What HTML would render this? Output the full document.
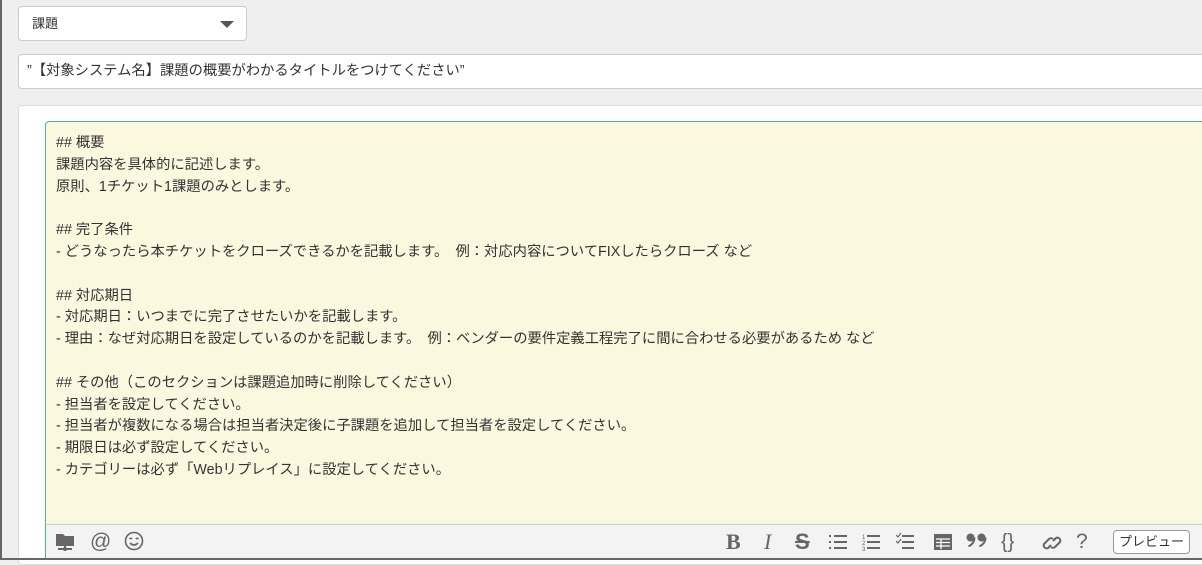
<!DOCTYPE html>
<html><head><meta charset="utf-8"><style>
*{box-sizing:border-box;margin:0;padding:0}
body{width:1202px;height:560px;background:#efefef;font-family:"Liberation Sans","Noto Sans CJK JP",sans-serif;color:#333;position:relative;overflow:hidden}
.bl{position:absolute;left:0;top:0;width:2px;height:560px;background:#666;z-index:9}
.bb{position:absolute;left:0;top:558px;width:1202px;height:2px;background:#666;z-index:9}
.sel{position:absolute;left:18px;top:6px;width:229px;height:35px;background:#fff;border:1px solid #ccc;border-radius:4px;font-size:13px;line-height:33px;padding-left:13px}
.sel:after{content:"";position:absolute;right:12px;top:14px;border-left:7px solid transparent;border-right:7px solid transparent;border-top:7px solid #555}
.title{position:absolute;left:18px;top:54px;width:1190px;height:35px;background:#fff;border:1px solid #ccc;border-radius:4px;font-size:14.3px;line-height:33px;padding-left:8px}
.panel{position:absolute;left:18px;top:105px;width:1200px;height:460px;background:#fff;border:1px solid #ddd;border-radius:4px}
.ta{position:absolute;left:45px;top:121px;width:1160px;height:404px;background:#faf8df;border:1px solid #4db38e;border-bottom:1px solid #ccc;border-radius:4px 0 0 0;font-size:14.3px;line-height:21.8px;padding:11px 0 0 10px;white-space:pre}
.tb{position:absolute;left:45px;top:525px;width:1160px;height:35px;background:#f3f3f3;border-left:1px solid #4db38e}
.ic{position:absolute;top:4px;color:#666;font-size:22px;line-height:26px}
.pv{position:absolute;left:1067px;top:5px;width:77px;height:24px;border:1px solid #999;border-radius:4px;background:#fff;font-size:13px;line-height:22px;text-align:center;color:#333}
svg{position:absolute}
</style></head><body>
<div class="bl"></div><div class="bb"></div>
<div class="sel">課題</div>
<div class="title">”【対象システム名】課題の概要がわかるタイトルをつけてください”</div>
<div class="panel"></div>
<div class="ta">## 概要
課題内容を具体的に記述します。
原則、1チケット1課題のみとします。

## 完了条件
- どうなったら本チケットをクローズできるかを記載します。　例：対応内容についてFIXしたらクローズ など

## 対応期日
- 対応期日：いつまでに完了させたいかを記載します。
- 理由：なぜ対応期日を設定しているのかを記載します。　例：ベンダーの要件定義工程完了に間に合わせる必要があるため など

## その他（このセクションは課題追加時に削除してください）
- 担当者を設定してください。
- 担当者が複数になる場合は担当者決定後に子課題を追加して担当者を設定してください。
- 期限日は必ず設定してください。
- カテゴリーは必ず「Webリプレイス」に設定してください。</div>
<div class="tb">
<svg style="left:9px;top:7px" width="20" height="20" viewBox="0 0 20 20"><path d="M1 2h7l2 2h9v10H1z" fill="#666"/><path d="M10 14v3M3 17h14" stroke="#666" stroke-width="2"/><circle cx="10" cy="17" r="2" fill="#666"/></svg>
<span class="ic" style="left:44px;font-size:21px">@</span>
<svg style="left:78px;top:6px" width="20" height="20" viewBox="0 0 20 20"><circle cx="10" cy="10" r="8.5" fill="none" stroke="#666" stroke-width="1.6"/><path d="M5.5 8q1.3-1.5 2.6 0M11.9 8q1.3-1.5 2.6 0M6 12q4 4 8 0" fill="none" stroke="#666" stroke-width="1.6"/></svg>
<span class="ic" style="left:680px;font-weight:bold;font-family:'Liberation Serif',serif">B</span>
<span class="ic" style="left:718px;font-style:italic;font-family:'Liberation Serif',serif">I</span>
<span class="ic" style="left:749px;text-decoration:line-through;font-weight:bold">S</span>
<svg style="left:783px;top:9px" width="18" height="16" viewBox="0 0 18 16"><path d="M0 2h2M0 8h2M0 14h2M5 2h13M5 8h13M5 14h13" stroke="#666" stroke-width="2"/></svg>
<svg style="left:816px;top:8px" width="18" height="18" viewBox="0 0 18 18"><text x="0" y="6" font-size="6" fill="#666">1</text><text x="0" y="12" font-size="6" fill="#666">2</text><text x="0" y="18" font-size="6" fill="#666">3</text><path d="M5 3h13M5 9h13M5 15h13" stroke="#666" stroke-width="2"/></svg>
<svg style="left:850px;top:8px" width="18" height="18" viewBox="0 0 18 18"><path d="M0 2l2 2 3-4" fill="none" stroke="#666" stroke-width="1.2"/><path d="M0 8l2 2 3-4" fill="none" stroke="#666" stroke-width="1.2"/><path d="M6 3h12M6 9h12M6 15h12" stroke="#666" stroke-width="2"/></svg>
<svg style="left:888px;top:9px" width="18" height="16" viewBox="0 0 18 16"><rect x="0" y="0" width="18" height="16" fill="#666"/><path d="M2 5h14M2 8.5h14M2 12h14M7 5v10" stroke="#fff" stroke-width="1.3"/></svg>
<svg style="left:920px;top:8px" width="22" height="14" viewBox="0 0 22 14"><circle cx="4.5" cy="4.5" r="4" fill="#666"/><path d="M8.5 4.5q0 6-6 9" stroke="#666" stroke-width="2" fill="none"/><circle cx="15.5" cy="4.5" r="4" fill="#666"/><path d="M19.5 4.5q0 6-6 9" stroke="#666" stroke-width="2" fill="none"/></svg>
<span class="ic" style="left:955px;font-size:20px">{}</span>
<svg style="left:996px;top:8px" width="20" height="20" viewBox="0 0 20 20"><path d="M9 12l-3 3a3 3 0 01-4-4l5-5a3 3 0 014 0M11 8l3-3a3 3 0 014 4l-5 5a3 3 0 01-4 0" fill="none" stroke="#666" stroke-width="2"/></svg>
<span class="ic" style="left:1030px;font-size:21px">?</span>
<div class="pv">プレビュー</div>
</div>
</body></html>
